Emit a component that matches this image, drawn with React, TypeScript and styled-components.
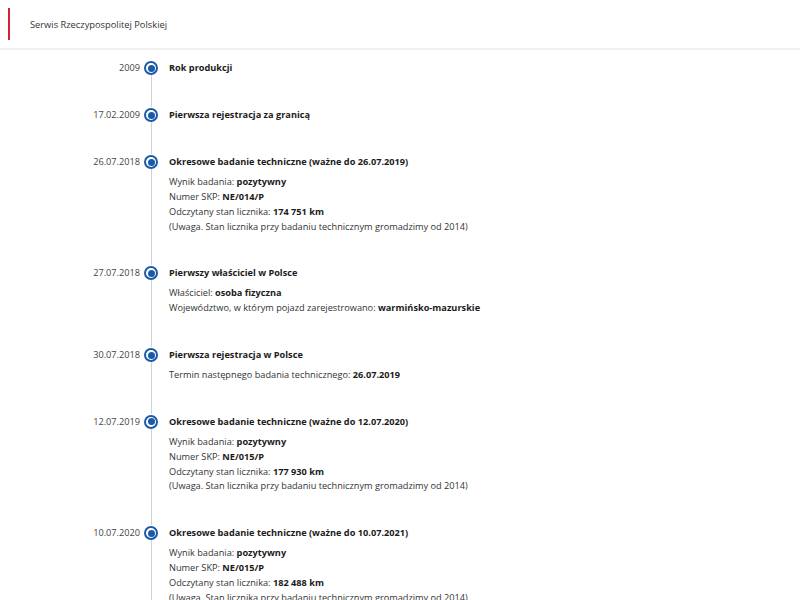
import styled, { createGlobalStyle } from 'styled-components';

const GlobalStyle = createGlobalStyle`
  body {
    margin: 0;
    background: #ffffff;
    font-family: 'Open Sans', 'Noto Sans', sans-serif;
    color: #1b1b1b;
  }
`;

const Header = styled.header`
  height: 48px;
  border-bottom: 2px solid #f0f0f0;
  display: flex;
  align-items: center;
  padding-left: 8px;
  gap: 20px;
`;

const RedBar = styled.div`
  width: 2px;
  height: 32px;
  background: #d4213d;
`;

const HeaderTitle = styled.span`
  font-size: 9.3px;
  color: #333;
  margin-top: 1px;
`;

const Timeline = styled.ol`
  list-style: none;
  margin: 0;
  padding: 10px 0 0 0;
`;

const Item = styled.li`
  display: grid;
  grid-template-columns: 140px 14px 1fr;
  column-gap: 4px;
`;

const DateCell = styled.div`
  font-size: 9.2px;
  line-height: 16px;
  text-align: right;
  color: #444;
`;

const Marker = styled.div`
  display: flex;
  flex-direction: column;
  align-items: center;
`;

const Dot = styled.div`
  width: 14px;
  height: 14px;
  margin-top: 1px;
  box-sizing: border-box;
  border: 2px solid #1a5aa6;
  border-radius: 50%;
  display: flex;
  align-items: center;
  justify-content: center;
  flex-shrink: 0;

  &::after {
    content: '';
    width: 7px;
    height: 7px;
    border-radius: 50%;
    background: #1a5aa6;
  }
`;

const Line = styled.div`
  flex: 1;
  width: 1px;
  background: #c9d2de;
`;

const Content = styled.div`
  padding: 0 0 31px 7px;
`;

const Title = styled.div`
  font-size: 9.2px;
  line-height: 16px;
  font-weight: 700;
  color: #1b1b1b;
`;

const Details = styled.div`
  margin-top: 5px;
  font-size: 9.2px;
  line-height: 14.85px;
  color: #333;

  b {
    font-weight: 700;
    color: #1b1b1b;
  }
`;

type Row = { label: string; value?: string };
type Event = { date: string; title: string; rows?: Row[] };

const NOTE = '(Uwaga. Stan licznika przy badaniu technicznym gromadzimy od 2014)';

const events: Event[] = [
  { date: '2009', title: 'Rok produkcji' },
  { date: '17.02.2009', title: 'Pierwsza rejestracja za granicą' },
  {
    date: '26.07.2018',
    title: 'Okresowe badanie techniczne (ważne do 26.07.2019)',
    rows: [
      { label: 'Wynik badania: ', value: 'pozytywny' },
      { label: 'Numer SKP: ', value: 'NE/014/P' },
      { label: 'Odczytany stan licznika: ', value: '174 751 km' },
      { label: NOTE },
    ],
  },
  {
    date: '27.07.2018',
    title: 'Pierwszy właściciel w Polsce',
    rows: [
      { label: 'Właściciel: ', value: 'osoba fizyczna' },
      { label: 'Województwo, w którym pojazd zarejestrowano: ', value: 'warmińsko-mazurskie' },
    ],
  },
  {
    date: '30.07.2018',
    title: 'Pierwsza rejestracja w Polsce',
    rows: [{ label: 'Termin następnego badania technicznego: ', value: '26.07.2019' }],
  },
  {
    date: '12.07.2019',
    title: 'Okresowe badanie techniczne (ważne do 12.07.2020)',
    rows: [
      { label: 'Wynik badania: ', value: 'pozytywny' },
      { label: 'Numer SKP: ', value: 'NE/015/P' },
      { label: 'Odczytany stan licznika: ', value: '177 930 km' },
      { label: NOTE },
    ],
  },
  {
    date: '10.07.2020',
    title: 'Okresowe badanie techniczne (ważne do 10.07.2021)',
    rows: [
      { label: 'Wynik badania: ', value: 'pozytywny' },
      { label: 'Numer SKP: ', value: 'NE/015/P' },
      { label: 'Odczytany stan licznika: ', value: '182 488 km' },
      { label: NOTE },
    ],
  },
];

const App = () => {
  return (
    <>
      <GlobalStyle />
      <Header>
        <RedBar />
        <HeaderTitle>Serwis Rzeczypospolitej Polskiej</HeaderTitle>
      </Header>
      <Timeline>
        {events.map((ev) => (
          <Item key={ev.date + ev.title}>
            <DateCell>{ev.date}</DateCell>
            <Marker>
              <Dot />
              <Line />
            </Marker>
            <Content>
              <Title>{ev.title}</Title>
              {ev.rows && (
                <Details>
                  {ev.rows.map((r) => (
                    <div key={r.label + (r.value ?? '')}>
                      {r.label}
                      {r.value && <b>{r.value}</b>}
                    </div>
                  ))}
                </Details>
              )}
            </Content>
          </Item>
        ))}
      </Timeline>
    </>
  );
};

export default App;
